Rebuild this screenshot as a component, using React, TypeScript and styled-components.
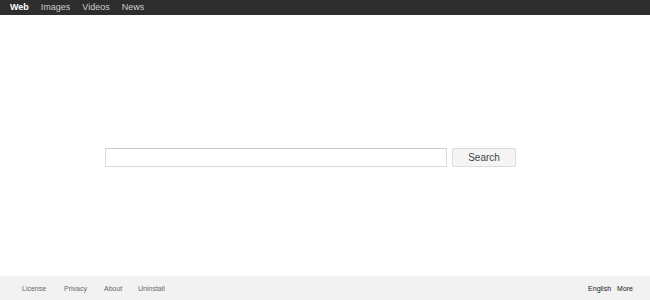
import React from 'react';
import styled, { createGlobalStyle } from 'styled-components';

const Global = createGlobalStyle`
  html, body { margin: 0; padding: 0; background: #fff; }
  body { font-family: Arial, "Liberation Sans", sans-serif; }
`;

const Page = styled.div`
  width: 650px;
  height: 300px;
  display: flex;
  flex-direction: column;
  overflow: hidden;
`;

const TopBar = styled.nav`
  height: 15px;
  background: #2d2d2d;
  display: flex;
  align-items: center;
  padding-left: 10px;
  gap: 12px;
`;

const TopLink = styled.a<{ $active?: boolean }>`
  font-size: 9px;
  line-height: 15px;
  color: ${({ $active }) => ($active ? '#fff' : '#ccc')};
  font-weight: ${({ $active }) => ($active ? 700 : 400)};
  text-decoration: none;
`;

const Main = styled.main`
  flex: 1;
  display: flex;
  justify-content: flex-start;
  align-items: flex-start;
  padding: 133px 0 0 105px;
  gap: 5px;
`;

const Input = styled.input`
  box-sizing: border-box;
  width: 342px;
  height: 19px;
  border: 1px solid #d9d9d9;
  border-top-color: #c8c8c8;
  margin: 0;
  padding: 0 4px;
  outline: none;
`;

const Button = styled.button`
  box-sizing: border-box;
  width: 64px;
  height: 19px;
  margin: 0;
  background: #f5f5f5;
  border: 1px solid #dcdcdc;
  border-radius: 2px;
  color: #444;
  font-family: Arial, "Liberation Sans", sans-serif;
  font-size: 10px;
  padding: 0;
`;

const Footer = styled.footer`
  height: 24px;
  background: #f2f2f2;
  display: flex;
  align-items: center;
  justify-content: space-between;
  padding: 0 17px 0 22px;
`;

const FootLinks = styled.div`
  display: flex;
`;

const FootLink = styled.a<{ $w: number }>`
  width: ${({ $w }) => $w}px;
  font-size: 7px;
  color: #666;
  text-decoration: none;
`;

const Lang = styled.div`
  display: flex;
  gap: 6px;
  font-size: 7px;
  color: #222;
`;

export default function App() {
  return (
    <Page>
      <Global />
      <TopBar>
        <TopLink $active>Web</TopLink>
        <TopLink>Images</TopLink>
        <TopLink>Videos</TopLink>
        <TopLink>News</TopLink>
      </TopBar>
      <Main>
        <Input type="text" />
        <Button>Search</Button>
      </Main>
      <Footer>
        <FootLinks>
          <FootLink $w={42}>License</FootLink>
          <FootLink $w={40}>Privacy</FootLink>
          <FootLink $w={34}>About</FootLink>
          <FootLink $w={40}>Uninstall</FootLink>
        </FootLinks>
        <Lang>
          <span>English</span>
          <span>More</span>
        </Lang>
      </Footer>
    </Page>
  );
}
